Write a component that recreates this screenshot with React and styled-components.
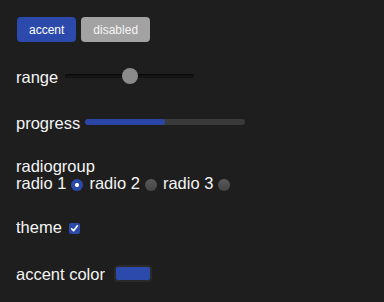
import React from 'react';
import styled, { createGlobalStyle } from 'styled-components';

const accent = '#2b4aab';

const GlobalStyle = createGlobalStyle`
  html, body {
    margin: 0;
    background: #1e1e1e;
    color: #f4f4f4;
    font-family: "Liberation Sans", Arial, sans-serif;
    font-size: 16.5px;
  }
`;

const Page = styled.div`
  display: flex;
  flex-direction: column;
  padding: 17px 16px;
`;

const ButtonRow = styled.div`
  display: flex;
  gap: 5px;
  padding-left: 1px;
`;

const Button = styled.button`
  height: 25px;
  padding: 0 12px;
  border: none;
  border-radius: 4px;
  font-family: inherit;
  font-size: 12px;
  color: ${(p) => (p.disabled ? '#f4f4f4' : '#ffffff')};
  background: ${(p) => (p.disabled ? '#a2a2a2' : accent)};
`;

const Row = styled.div`
  display: flex;
  align-items: flex-start;
  gap: ${(p) => p.gap || 7}px;
  line-height: 19px;
  margin-top: ${(p) => p.mt || 0}px;
`;

const Slider = styled.input`
  appearance: none;
  width: 129px;
  height: 16px;
  margin: 0;
  background: transparent;

  &::-webkit-slider-runnable-track {
    height: 4px;
    border-radius: 2px;
    background: #141414;
    box-shadow: inset 0 1px 1px rgba(0, 0, 0, 0.6);
  }
  &::-webkit-slider-thumb {
    appearance: none;
    width: 16px;
    height: 16px;
    margin-top: -6px;
    border-radius: 50%;
    background: #8b8b8b;
  }
`;

const Progress = styled.div`
  width: 160px;
  height: 6px;
  margin-top: 5px;
  border-radius: 3px;
  background: #3a3a3a;
  overflow: hidden;
`;

const ProgressFill = styled.div`
  height: 100%;
  border-radius: 3px;
  background: #2c46a8;
`;

const GroupLabel = styled.div`
  line-height: 15px;
  margin-top: 26px;
`;

const RadioLine = styled.div`
  display: flex;
  align-items: flex-start;
  line-height: 19px;
`;

const Radio = styled.input`
  appearance: none;
  width: 12px;
  height: 12px;
  margin: 5px 6px 0 5px;
  border-radius: 50%;
  background: ${(p) =>
    p.checked
      ? `radial-gradient(circle, #fff 0 1.8px, ${accent} 2.3px)`
      : 'linear-gradient(#5a5a5a, #444)'};
`;

const CheckWrap = styled.span`
  position: relative;
  display: inline-flex;
  margin-top: 5px;

  svg {
    position: absolute;
    left: 1px;
    top: 1px;
    pointer-events: none;
  }
`;

const Checkbox = styled.input`
  appearance: none;
  width: 11px;
  height: 11px;
  margin: 0;
  border-radius: 2px;
  background: ${accent};
`;

const ColorWell = styled.div`
  display: flex;
  padding: 2px;
  width: 34px;
  height: 13px;
  margin-left: 2px;
  border-radius: 4px;
  background: #2a2a2a;
`;

const Swatch = styled.div`
  flex: 1;
  border-radius: 2px;
  background: ${(p) => p.color};
`;

export default function App() {
  return (
    <>
      <GlobalStyle />
      <Page>
        <ButtonRow>
          <Button>accent</Button>
          <Button disabled>disabled</Button>
        </ButtonRow>

        <Row mt={26}>
          <span>range</span>
          <Slider type="range" defaultValue={50} />
        </Row>

        <Row mt={27} gap={5}>
          <span>progress</span>
          <Progress>
            <ProgressFill style={{ width: '50%' }} />
          </Progress>
        </Row>

        <GroupLabel>radiogroup</GroupLabel>
        <RadioLine>
          <span>radio 1</span>
          <Radio type="radio" name="r" defaultChecked checked readOnly />
          <span>radio 2</span>
          <Radio type="radio" name="r" />
          <span>radio 3</span>
          <Radio type="radio" name="r" />
        </RadioLine>

        <Row mt={25}>
          <span>theme</span>
          <CheckWrap>
            <Checkbox type="checkbox" defaultChecked />
            <svg width="9" height="9" viewBox="0 0 9 9">
              <path d="M1.6 4.8 L3.6 6.8 L7.4 1.8" fill="none" stroke="#fff" strokeWidth="1.6" strokeLinecap="round" strokeLinejoin="round" />
            </svg>
          </CheckWrap>
        </Row>

        <Row mt={28} gap={7}>
          <span>accent color</span>
          <ColorWell>
            <Swatch color={accent} />
          </ColorWell>
        </Row>
      </Page>
    </>
  );
}
